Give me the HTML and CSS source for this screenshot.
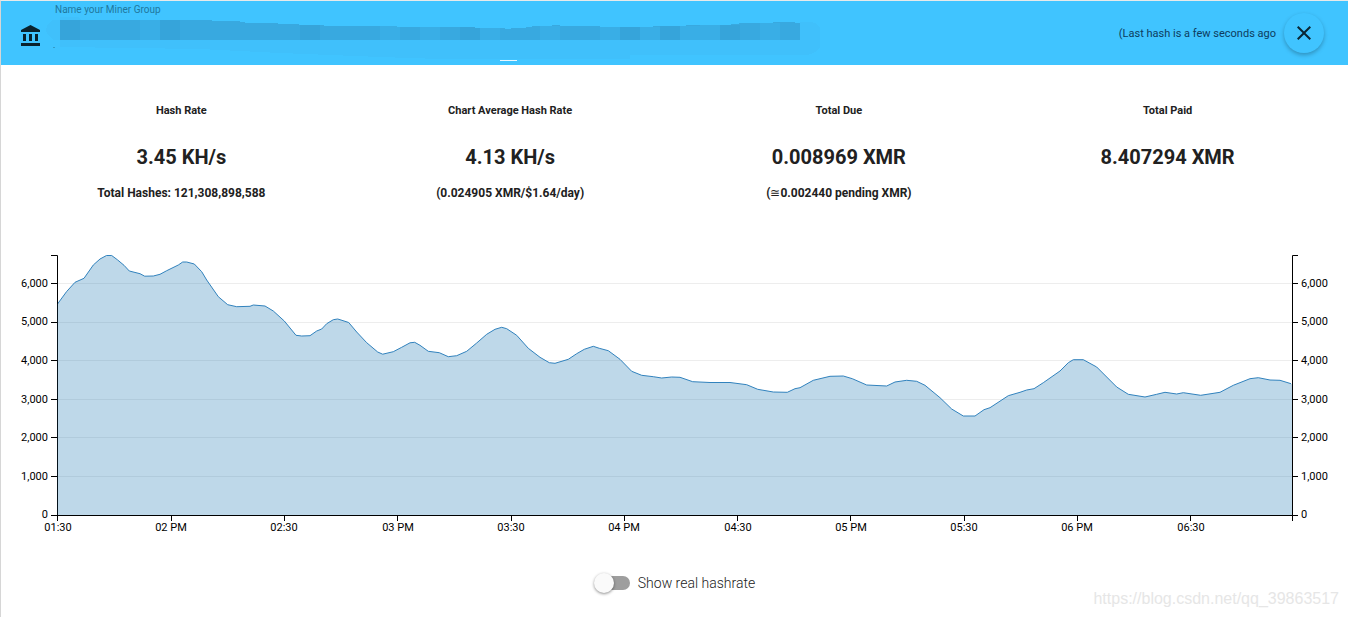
FILE: index.html
```html
<!DOCTYPE html>
<html lang="en">
<head>
<meta charset="utf-8">
<meta name="viewport" content="width=device-width, initial-scale=1">
<title>Miner Group</title>
<link rel="stylesheet" href="styles.css">
</head>
<body>
<main class="panel">
  <header class="toolbar">
    <svg class="bank-icon" viewBox="0 0 24 24" aria-hidden="true"><path d="M4 10v7h3v-7H4zm6 0v7h3v-7h-3zM2 22h19v-3H2v3zm14-12v7h3v-7h-3zm-4.5-9L2 6v2h19V6l-9.5-5z"/></svg>
    <div class="name-field">
      <label class="name-label" for="miner-name">Name your Miner Group</label>
      <input class="name-input" id="miner-name" type="text">
      <svg class="redaction" viewBox="46 17 774 46" aria-hidden="true">
        <path fill="#40c0fb" d="M60 17h18l3 3h-21v20H54q-8-6-8-10t6-10h8zM60 40H800V22h12q8 2 8 8v17q-5 8-17 8H630v4H440l-60-2-100-4-80-4-140-2z"/>
        <path fill="#38a9e0" d="M60 20H212V21H240V22H245V23H278V24H299V25H324V26H397V27H475V28H505V29H511V28H526V27H532V26H552V25H560V26H600V27H653V26H686V25H731V24H739V23H773V22H795V23H800V40H60z"/>
        <path fill="#39aee6" d="M140 20h20v20h-20zM380 26h17v1h3v13h-20zM420 27h20v13h-20zM480 28h20v12h-20zM540 26h20v14h-20zM600 27h20v13h-20zM640 27h20v13h-20zM680 26h20v14h-20zM700 25h20v15h-20zM760 23h20v17h-20z"/>
        <path fill="#36a4da" d="M60 20h20v20H60zM160 20h20v20h-20zM300 25h20v15h-20zM460 27h15v1h5v12h-20zM620 27h20v13h-20zM660 26h20v14h-20zM720 25h20v15h-20z"/>
        <path fill="#eaf7ff" d="M500 60h17v1h-17z"/>
        <path fill="#329cca" d="M53 47h2v1h-2z"/>
      </svg>
    </div>
    <p class="last-hash">(Last hash is a few seconds ago</p>
    <button class="close-button" type="button" aria-label="Close">
      <svg class="close-icon" viewBox="0 0 24 24" aria-hidden="true"><path d="M19 6.41L17.59 5 12 10.59 6.41 5 5 6.41 10.59 12 5 17.59 6.41 19 12 13.41 17.59 19 19 17.59 13.41 12z"/></svg>
    </button>
  </header>

  <section class="stats">
    <div class="stat"><h2 class="stat-title">Hash Rate</h2><p class="stat-value">3.45 KH/s</p><p class="stat-note">Total Hashes: 121,308,898,588</p></div>
    <div class="stat"><h2 class="stat-title">Chart Average Hash Rate</h2><p class="stat-value">4.13 KH/s</p><p class="stat-note">(0.024905 XMR/$1.64/day)</p></div>
    <div class="stat"><h2 class="stat-title">Total Due</h2><p class="stat-value">0.008969 XMR</p><p class="stat-note">(<span class="approx">≅</span>0.002440 pending XMR)</p></div>
    <div class="stat"><h2 class="stat-title">Total Paid</h2><p class="stat-value">8.407294 XMR</p></div>
  </section>

  <svg class="chart" viewBox="1 240 1347 300" role="img" aria-label="Hash rate over time">
    <path class="grid-lines" d="M58 476.5H1292M58 437.5H1292M58 399.5H1292M58 360.5H1292M58 322.5H1292M58 283.5H1292"/>
    <path class="axis" d="M51 255.5H57.5V521M51 515.5H1298M1298 255.5H1292.5V521M51 476.5h6M51 437.5h6M51 399.5h6M51 360.5h6M51 322.5h6M51 283.5h6M1292 476.5h6M1292 437.5h6M1292 399.5h6M1292 360.5h6M1292 322.5h6M1292 283.5h6M171.5 515v6M284.5 515v6M397.5 515v6M511.5 515v6M624.5 515v6M737.5 515v6M850.5 515v6M964.5 515v6M1077.5 515v6M1190.5 515v6"/>
    <defs>
      <path id="series" d="M57.500 304L66.500 291.700 75 282.300 84 278.300 93.300 265 100 259 106.500 255.500 111.700 255.500 117.300 259.700 124 265.300 129.300 271 140 273.700 144.700 276.200 153.300 276 160 274.300 166.700 270.700 178.300 265 182.700 262 186.700 262 194.300 264 201.700 271.700 206.700 280 218.300 296.700 227.700 304.700 236.700 306.700 250 306.300 253.300 305 265 306 273.300 311 284.300 321 296 335.300 301.700 336 310 335.700 316.700 331 321.700 329 326.700 323.700 333.300 319.700 337.700 319 340 319.700 348.700 322.500 356.700 332 366.700 342.700 377.700 352 382.700 354.200 393.300 351.700 401.700 347.300 410 342.800 414.700 342.300 420 345.300 428.300 351.300 439.300 352.700 448.300 356.700 456.700 355.700 466.700 351.300 476.700 343 486.700 334.300 495 329.300 501.700 327.300 506.700 328.700 516.700 335.300 528.300 348.300 540 357.300 549.300 362.700 555 363.300 568.300 359.300 576.700 353.700 584.300 349.300 593.300 346.300 599.300 348.300 608.300 350.700 620 359.300 631.700 371.300 641.700 375.300 653.300 376.700 661.700 378 671.700 377 680 377.300 692.700 381.700 710 382.500 730 382.500 746.700 384.700 757.700 389.300 773.300 392 787.300 392.300 795 388.700 800 387.700 813.300 380.300 830 376.300 843.300 376 852.300 378.700 866.700 385 886.700 386 895 382 906.700 380.300 916.700 381.300 925 385.300 940 397.700 951.700 409 963.300 416 975 416 984 409.700 990 407.700 1008.300 395.700 1020 392.300 1026.700 390 1034 388.700 1043.300 382.700 1060 371 1068.300 362.700 1073.300 359.700 1083.300 359.700 1096.700 367 1116.700 387 1128.300 394.300 1145 397 1156.700 394.300 1165 392.300 1176.700 394 1183.300 392.700 1200.700 395.300 1220 392.300 1233.300 385.300 1250 378.700 1258.300 377.700 1270 380 1280 380.300 1292 384V515H57.500Z"/>
      <clipPath id="plot"><rect x="58" y="250" width="1233" height="264"/></clipPath>
    </defs>
    <use class="area" href="#series"/>
    <use class="line" href="#series" clip-path="url(#plot)"/>
    <g class="labels labels-left">
      <text x="48" y="518">0</text><text x="48" y="480">1,000</text><text x="48" y="441">2,000</text><text x="48" y="403">3,000</text><text x="48" y="364">4,000</text><text x="48" y="325">5,000</text><text x="48" y="287">6,000</text>
    </g>
    <g class="labels">
      <text x="1301" y="518">0</text><text x="1301" y="480">1,000</text><text x="1301" y="441">2,000</text><text x="1301" y="403">3,000</text><text x="1301" y="364">4,000</text><text x="1301" y="325">5,000</text><text x="1301" y="287">6,000</text>
    </g>
    <g class="labels labels-time">
      <text x="58" y="531">01:30</text><text x="171" y="531">02 PM</text><text x="284" y="531">02:30</text><text x="398" y="531">03 PM</text><text x="511" y="531">03:30</text><text x="624" y="531">04 PM</text><text x="738" y="531">04:30</text><text x="851" y="531">05 PM</text><text x="964" y="531">05:30</text><text x="1077" y="531">06 PM</text><text x="1191" y="531">06:30</text>
    </g>
  </svg>

  <label class="switch">
    <input class="switch-input" type="checkbox" role="switch">
    <span>Show real hashrate</span>
  </label>
  <div class="watermark">https://blog.csdn.net/qq_39863517</div>
</main>
</body>
</html>
```
FILE: styles.css
```css
* { box-sizing: border-box; }
body {
  margin: 0;
  background: #fff;
  color: #212121;
  font-family: Roboto, sans-serif;
}
.panel {
  position: relative;
  min-height: 100vh;
  border-top: 1px solid #e8eaea;
  border-left: 1px solid #d6d6d6;
}
.toolbar {
  display: flex;
  align-items: center;
  height: 64px;
  padding: 0 24px 0 18px;
  background: #40c4ff;
}
.bank-icon {
  flex: none;
  width: 24px;
  height: 24px;
  margin: 5px 12px 0 0;
  fill: #09222d;
}
.name-field {
  position: relative;
  flex: 1;
  align-self: stretch;
}
.name-label {
  display: block;
  height: 18px;
  color: #20789e;
  font-size: 10px;
  line-height: 18px;
}
.name-input {
  display: block;
  width: 100%;
  height: 30px;
  padding: 0;
  border: 0;
  outline: 0;
  background: transparent;
  font: inherit;
}
.redaction {
  position: absolute;
  top: 16px;
  left: -9px;
  width: 774px;
  height: 46px;
  pointer-events: none;
  shape-rendering: crispEdges;
}
.last-hash {
  margin: 0 8px 0 0;
  color: #0d3c60;
  font-size: 11px;
}
.close-button {
  display: grid;
  place-items: center;
  width: 40px;
  height: 40px;
  padding: 0;
  border: 0;
  border-radius: 50%;
  background: #40c4ff;
  box-shadow: 0 2px 4px rgba(0, 0, 0, .26);
}
.close-icon {
  width: 24px;
  height: 24px;
  fill: #0a2734;
}
.stats {
  display: grid;
  grid-template-columns: repeat(4, 1fr);
  min-height: 175px;
  padding: 36px 16px 0;
  text-align: center;
}
.stat-title, .stat-value, .stat-note {
  margin: 0;
  font-weight: 700;
}
.stat-title {
  font-size: 11px;
  line-height: 20px;
}
.stat-value {
  margin: 20px 0 16px;
  font-size: 20px;
  line-height: 32px;
}
.stat-note {
  font-size: 12px;
  line-height: 8px;
}
.approx { font-weight: 400; }
.chart {
  display: block;
  width: 100%;
  height: auto;
}
.grid-lines { stroke: #ededed; }
.axis { fill: none; stroke: #000; }
.area { fill: #1f77b4; fill-opacity: .29; }
.line { fill: none; stroke: #3182bd; }
.labels { fill: #000; font-size: 11px; }
.labels-left { text-anchor: end; }
.labels-time { text-anchor: middle; }
.switch {
  display: flex;
  justify-content: center;
  align-items: center;
  gap: 8px;
  margin-top: 31px;
  font-size: 14px;
  font-weight: 300;
  line-height: 24px;
}
.switch-input {
  appearance: none;
  position: relative;
  width: 36px;
  height: 20px;
  margin: 0;
}
.switch-input::before {
  content: "";
  position: absolute;
  inset: 3px 0 3px 1px;
  border-radius: 7px;
  background: #9e9e9e;
}
.switch-input::after {
  content: "";
  position: absolute;
  top: 0;
  left: 0;
  width: 20px;
  height: 20px;
  border-radius: 50%;
  background: #fafafa;
  box-shadow: 0 1px 3px rgba(0, 0, 0, .45);
}
.switch-input:checked::after { left: 16px; }
.watermark {
  position: absolute;
  right: 9px;
  bottom: 8px;
  color: #e6e6e6;
  font-family: "Liberation Sans", sans-serif;
  font-size: 16px;
  line-height: 20px;
}
```
